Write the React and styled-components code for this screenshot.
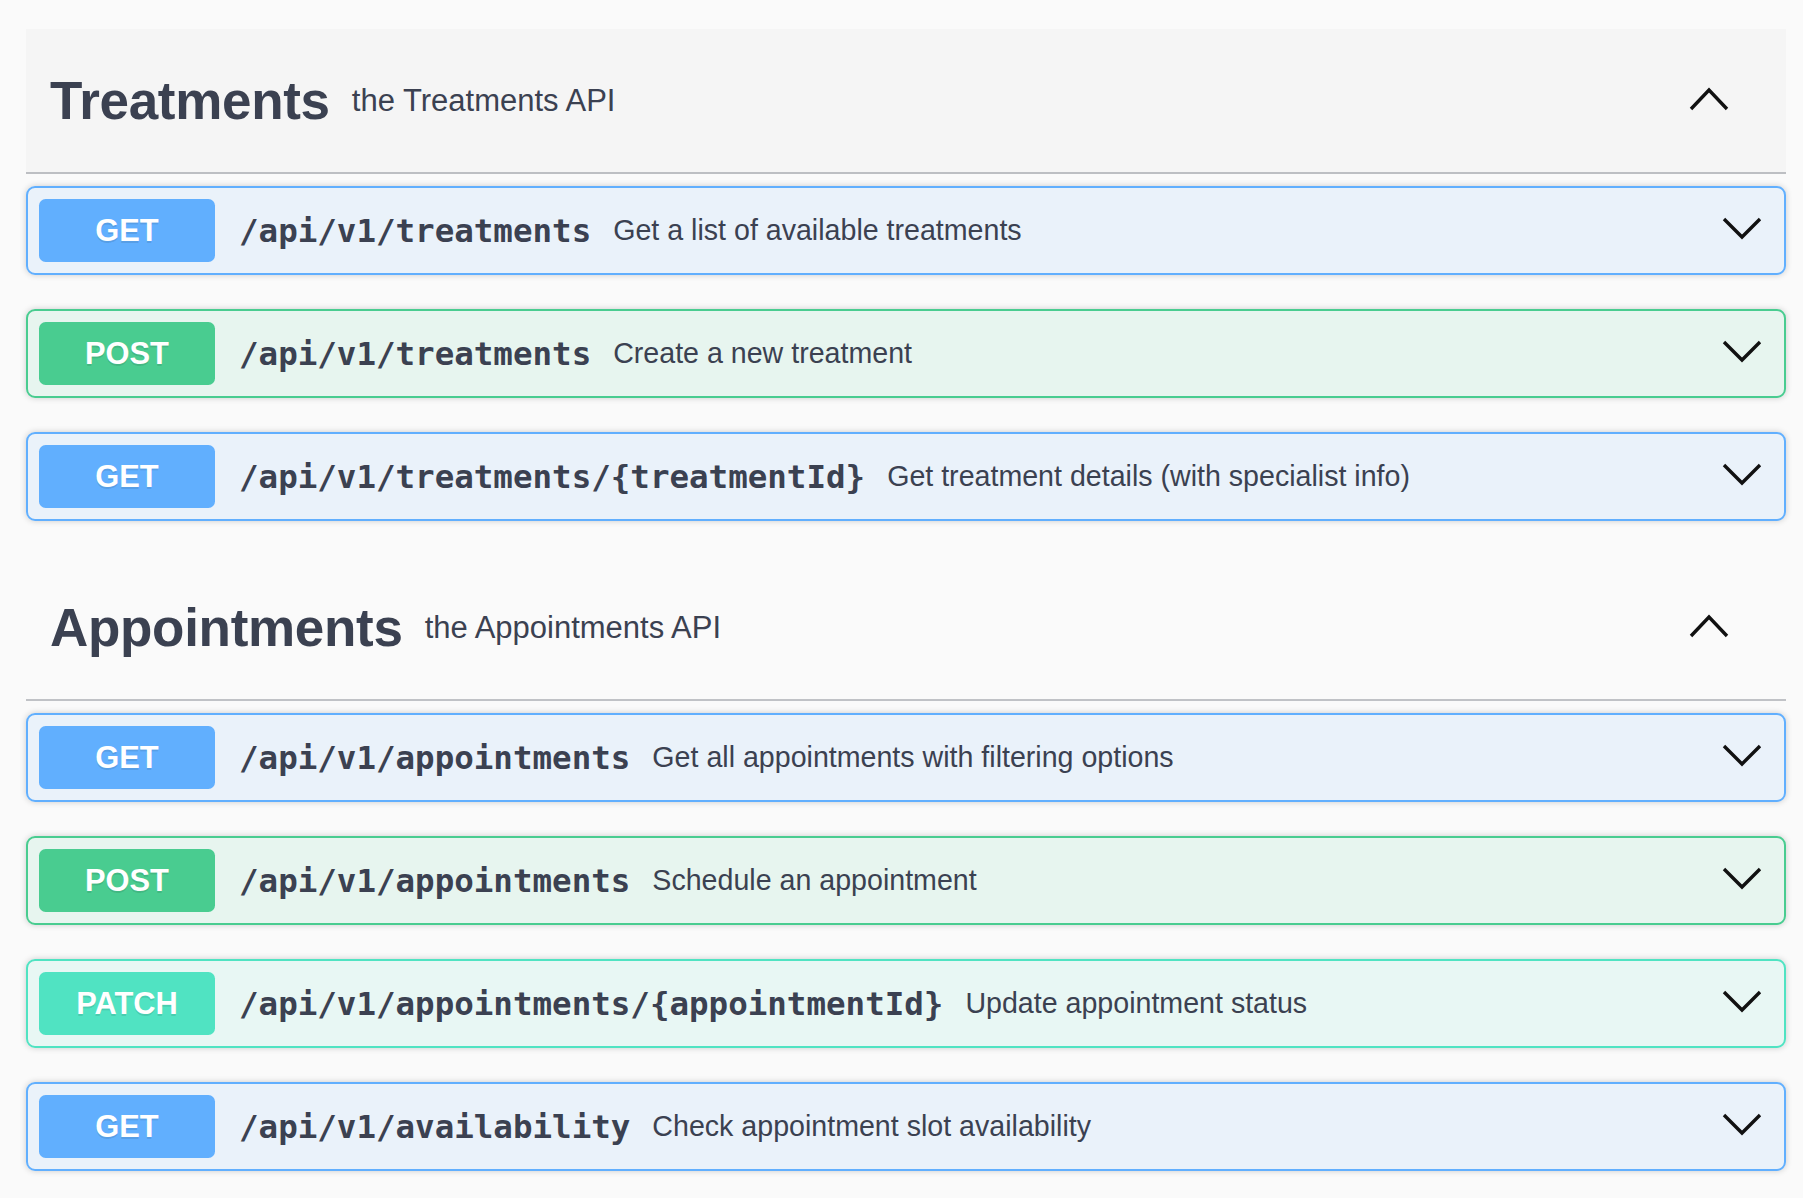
import React from "react";
import styled, { createGlobalStyle } from "styled-components";

const Global = createGlobalStyle`
  html, body { margin: 0; padding: 0; background: #fafafa; }
  body { font-family: "Liberation Sans", Arial, sans-serif; color: #3b4151; }
`;

const METHOD = {
  GET: { c: "#61affe", bg: "rgba(97,175,254,.1)" },
  POST: { c: "#49cc90", bg: "rgba(73,204,144,.1)" },
  PATCH: { c: "#50e3c2", bg: "rgba(80,227,194,.1)" },
};

const Page = styled.div`
  padding: 29px 0 40px 26px;
  width: 1760px;
`;

const Section = styled.section`
  margin-bottom: 0;
`;

const TagHeader = styled.div`
  display: flex;
  align-items: center;
  box-sizing: border-box;
  height: 145px;
  padding: 0 57px 0 24px;
  border-bottom: 2px solid rgba(59, 65, 81, 0.3);
  background: ${(p) => (p.$hover ? "rgba(0,0,0,.02)" : "transparent")};
  margin-bottom: 12px;
`;

const TagTitle = styled.h3`
  margin: 0;
  font-size: 53px;
  font-weight: 700;
  color: #3b4151;
  letter-spacing: -0.3px;
`;

const TagDesc = styled.small`
  flex: 1;
  padding: 0 22px;
  font-size: 31px;
  font-weight: 400;
  color: #3b4151;
`;

const OpList = styled.div`
  display: flex;
  flex-direction: column;
  gap: 34px;
  margin-bottom: 35px;
`;

const Op = styled.div`
  box-sizing: border-box;
  height: 89px;
  display: flex;
  align-items: center;
  padding: 0 22px 0 11px;
  border: 2.2px solid ${(p) => METHOD[p.$m].c};
  background: ${(p) => METHOD[p.$m].bg};
  border-radius: 9px;
  box-shadow: 0 0 6px rgba(0, 0, 0, 0.19);
`;

const Badge = styled.span`
  flex: none;
  width: 176px;
  height: 63px;
  display: flex;
  align-items: center;
  justify-content: center;
  border-radius: 6.6px;
  background: ${(p) => METHOD[p.$m].c};
  color: #fff;
  font-family: "Liberation Sans", Arial, sans-serif;
  font-weight: 700;
  font-size: 30.8px;
  text-shadow: 0 2px 0 rgba(0, 0, 0, 0.1);
`;

const Path = styled.span`
  padding: 0 22px 0 24px;
  font-family: "DejaVu Sans Mono", monospace;
  font-weight: 700;
  font-size: 32.5px;
  color: #3b4151;
  white-space: nowrap;
`;

const Summary = styled.span`
  flex: 1;
  font-size: 28.6px;
  color: #3b4151;
  white-space: nowrap;
`;

const ChevronBox = styled.svg`
  flex: none;
  margin-bottom: ${(p) => (p.$up ? "4px" : "6px")};
`;

const Chevron = ({ up }) => (
  <ChevronBox $up={up} width="40" height="24" viewBox="0 0 40 24">
    <polyline
      points={up ? "2,22 20,3 38,22" : "2,3 20,21 38,3"}
      fill="none"
      stroke="#111"
      strokeWidth="3.4"
    />
  </ChevronBox>
);

const sections = [
  {
    title: "Treatments",
    desc: "the Treatments API",
    hover: true,
    ops: [
      ["GET", "/api/v1/treatments", "Get a list of available treatments"],
      ["POST", "/api/v1/treatments", "Create a new treatment"],
      ["GET", "/api/v1/treatments/{treatmentId}", "Get treatment details (with specialist info)"],
    ],
  },
  {
    title: "Appointments",
    desc: "the Appointments API",
    hover: false,
    ops: [
      ["GET", "/api/v1/appointments", "Get all appointments with filtering options"],
      ["POST", "/api/v1/appointments", "Schedule an appointment"],
      ["PATCH", "/api/v1/appointments/{appointmentId}", "Update appointment status"],
      ["GET", "/api/v1/availability", "Check appointment slot availability"],
    ],
  },
];

export default function App() {
  return (
    <>
      <Global />
      <Page>
        {sections.map((s) => (
          <Section key={s.title}>
            <TagHeader $hover={s.hover}>
              <TagTitle>{s.title}</TagTitle>
              <TagDesc>{s.desc}</TagDesc>
              <Chevron up />
            </TagHeader>
            <OpList>
              {s.ops.map(([m, p, d], i) => (
                <Op key={i} $m={m}>
                  <Badge $m={m}>{m}</Badge>
                  <Path>{p}</Path>
                  <Summary>{d}</Summary>
                  <Chevron />
                </Op>
              ))}
            </OpList>
          </Section>
        ))}
      </Page>
    </>
  );
}
